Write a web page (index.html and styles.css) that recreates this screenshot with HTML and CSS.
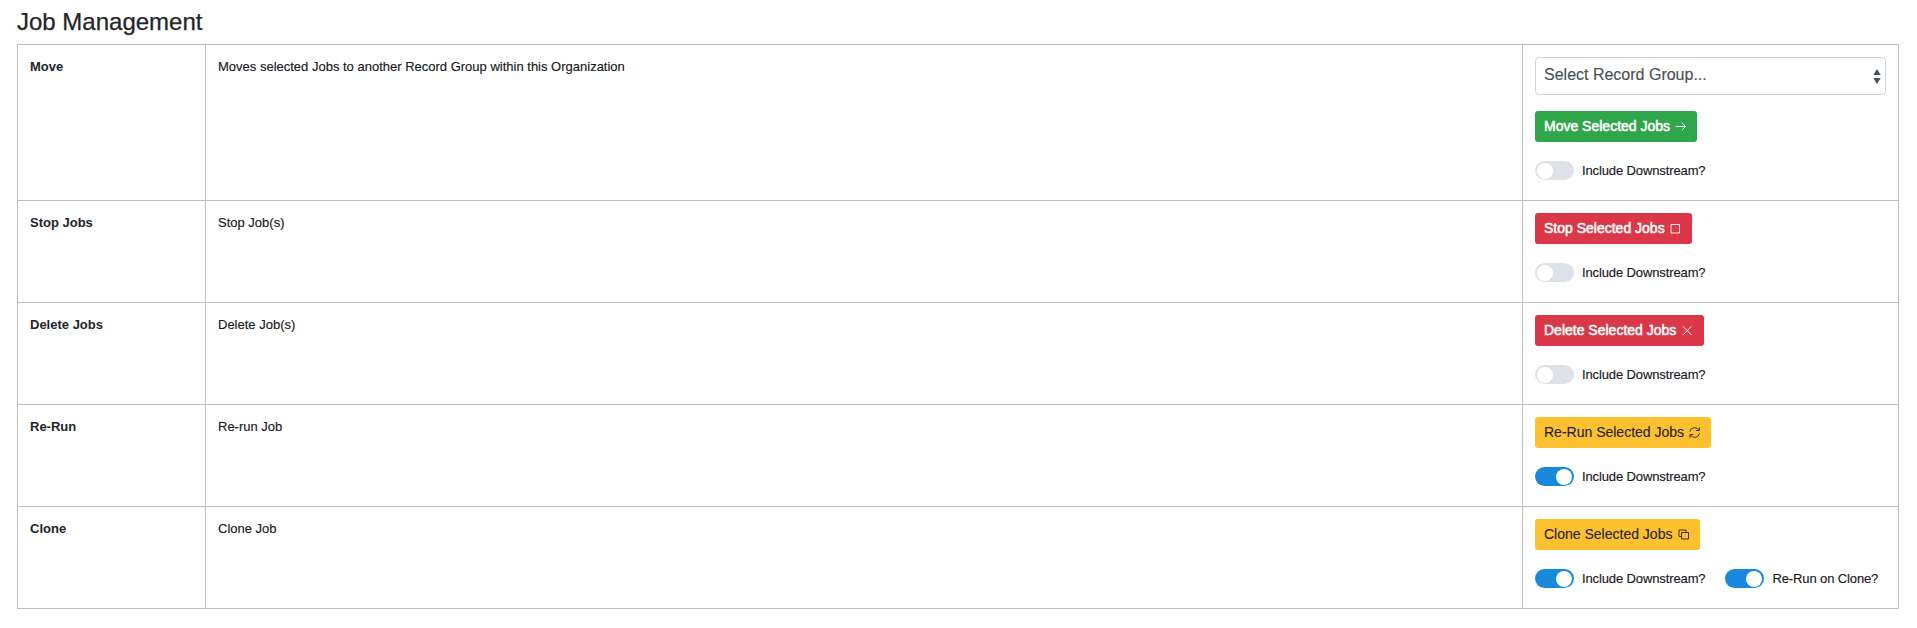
FILE: index.html
```html
<!DOCTYPE html>
<html lang="en">
<head>
<meta charset="utf-8">
<title>Job Management</title>
<link rel="stylesheet" href="styles.css">
</head>
<body>
<main class="page">
  <h1 class="title">Job Management</h1>
  <table class="jobs">
    <colgroup><col class="col-name"><col class="col-desc"><col class="col-actions"></colgroup>
    <tbody>
      <tr class="row row-tall">
        <th>Move</th>
        <td>Moves selected Jobs to another Record Group within this Organization</td>
        <td>
          <div class="select"><span>Select Record Group...</span>
            <svg class="caret" viewBox="0 0 8 15"><path d="M0.3 6L4 0l3.7 6zM0.3 9L4 15l3.7-6z" fill="#495057"/></svg>
          </div>
          <button class="btn btn-green">Move Selected Jobs
            <svg class="icon" viewBox="0 0 14 14"><path d="M1.5 6.5h10M7.9 2.8l3.7 3.7-3.7 3.7"/></svg>
          </button>
          <div class="toggles"><label class="toggle"><span class="switch"></span>Include Downstream?</label></div>
        </td>
      </tr>
      <tr class="row">
        <th>Stop Jobs</th>
        <td>Stop Job(s)</td>
        <td>
          <button class="btn btn-red">Stop Selected Jobs
            <svg class="icon" viewBox="0 0 14 14"><path d="M2 2.5h8.5v8.5H2z"/></svg>
          </button>
          <div class="toggles"><label class="toggle"><span class="switch"></span>Include Downstream?</label></div>
        </td>
      </tr>
      <tr class="row">
        <th>Delete Jobs</th>
        <td>Delete Job(s)</td>
        <td>
          <button class="btn btn-red btn-wide">Delete Selected Jobs
            <svg class="icon" viewBox="0 0 14 14"><path d="M1.8 2.2l8.8 8.8M10.6 2.2L1.8 11"/></svg>
          </button>
          <div class="toggles"><label class="toggle"><span class="switch"></span>Include Downstream?</label></div>
        </td>
      </tr>
      <tr class="row">
        <th>Re-Run</th>
        <td>Re-run Job</td>
        <td>
          <button class="btn btn-yellow">Re-Run Selected Jobs
            <svg class="icon" viewBox="0 0 14 14"><path d="M1.9 5.7a4.8 4.8 0 0 1 9-1.5M11.4 1.2v3.3H8.1M11.5 7.3a4.8 4.8 0 0 1-9 1.5M2 11.8V8.5h3.3"/></svg>
          </button>
          <div class="toggles"><label class="toggle"><span class="switch on"></span>Include Downstream?</label></div>
        </td>
      </tr>
      <tr class="row">
        <th>Clone</th>
        <td>Clone Job</td>
        <td>
          <button class="btn btn-yellow btn-wide">Clone Selected Jobs
            <svg class="icon" viewBox="0 0 14 14"><path d="M4.5 4.5h7v6.500h-7zM4.500 8.500h-2.500v-6.500h7v2.500"/></svg>
          </button>
          <div class="toggles">
            <label class="toggle"><span class="switch on"></span>Include Downstream?</label>
            <label class="toggle"><span class="switch on"></span>Re-Run on Clone?</label>
          </div>
        </td>
      </tr>
    </tbody>
  </table>
</main>
</body>
</html>
```
FILE: styles.css
```css
* { box-sizing: border-box; }
body {
  margin: 0;
  background: #fff;
  color: #212529;
  font: 13px/19.5px "Liberation Sans", Arial, sans-serif;
}
.page { padding: 7px 18px 0 17px; }
.title { margin: 0 0 8px; font-size: 24px; line-height: 29px; font-weight: 400; -webkit-text-stroke: 0.25px currentColor; }
.jobs { width: 1882px; border-collapse: collapse; table-layout: fixed; }
.col-name { width: 188px; }
.col-actions { width: 376px; }
.row { height: 102px; }
.row-tall { height: 156px; }
.jobs th, .jobs td {
  padding: 12px 12px 0;
  border: 1px solid #bfbfbf;
  text-align: left;
  vertical-align: top;
}
.jobs td { color: #17191c; -webkit-text-stroke: 0.15px currentColor; }
.select {
  display: flex;
  align-items: center;
  justify-content: space-between;
  height: 38px;
  margin-bottom: 16px;
  padding: 0 4px 2px 8px;
  border: 1px solid #ced4da;
  border-radius: 4px;
  color: #495057;
  font-size: 16px;
}
.caret { width: 8px; height: 15px; margin-top: 2px; }
.btn {
  display: flex;
  align-items: center;
  gap: 4px;
  height: 31px;
  padding: 0 9px;
  border: 0;
  border-radius: 3px;
  font: 14px/21px "Liberation Sans", Arial, sans-serif;
  color: #fff;
  -webkit-text-stroke: 0.5px currentColor;
}
.btn-wide { gap: 5px; }
.btn-green { background: #2fa64a; }
.btn-red { background: #da3849; }
.btn-yellow { background: #fdc02f; color: #212529; -webkit-text-stroke: 0.1px currentColor; }
.icon { width: 14px; height: 14px; fill: none; stroke: currentColor; stroke-width: 0.9; }
.toggles { display: flex; gap: 20px; margin-top: 19px; }
.toggle { display: flex; align-items: center; gap: 8px; height: 19px; white-space: nowrap; letter-spacing: -0.12px; }
.switch { width: 39px; height: 19px; padding: 1.5px 2px; border-radius: 10px; background: #dee2e6; }
.switch::before { content: ""; display: block; width: 16px; height: 16px; border-radius: 50%; background: #fff; }
.switch.on { background: #1989dc; }
.switch.on::before { margin-left: auto; }
```
